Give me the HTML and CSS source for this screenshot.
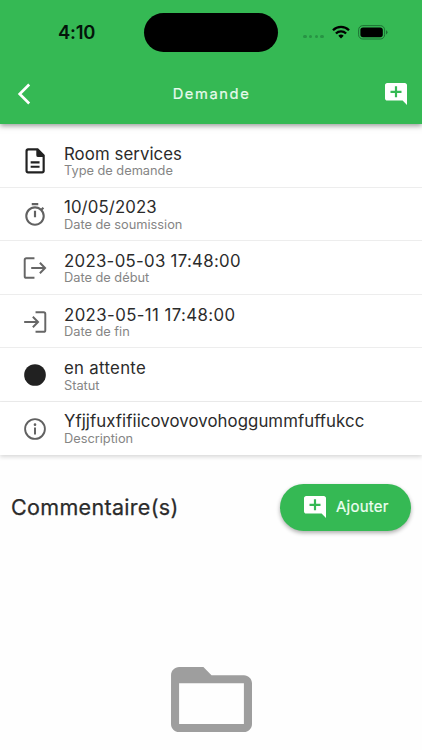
FILE: index.html
```html
<!DOCTYPE html>
<html lang="fr">
<head>
<meta charset="utf-8">
<title>Demande</title>
<link rel="stylesheet" href="styles.css">
</head>
<body>
<main class="screen">
  <header class="header">
    <div class="status">
      <span class="time">4:10</span>
      <span class="island"></span>
      <span class="signals">
        <span class="dots"><i></i><i></i><i></i><i></i></span>
        <svg class="wifi" viewBox="0 0 18 14"><g fill="none" stroke="#000" stroke-width="2.3"><path d="M1 5.2a11.3 11.3 0 0 1 16 0"/><path d="M3.9 8.5a7.2 7.2 0 0 1 10.2 0"/></g><path d="M9 13.4 6.3 10.8a3.8 3.8 0 0 1 5.4 0z"/></svg>
        <svg class="battery" viewBox="0 0 30 15"><rect x=".6" y=".6" width="26" height="13.4" rx="4.2" fill="none" stroke="#1d7134" stroke-width="1"/><rect x="2.4" y="2.4" width="22.4" height="9.8" rx="2.6"/><path d="M28 5.2v4.2q1.5-.6 1.5-2.1T28 5.2" fill="#1d7134"/></svg>
      </span>
    </div>
    <nav class="nav">
      <svg class="back" viewBox="0 0 14 24"><path d="M12.2 2.5 2.7 12l9.5 9.5" fill="none" stroke="#fff" stroke-width="2.7"/></svg>
      <h1 class="title">Demande</h1>
      <svg class="comment" viewBox="2 2 20 20"><path fill="#fff" d="M22 4c0-1.100-.9-2-2-2H4c-1.100 0-2 .9-2 2v12c0 1.100.9 2 2 2h14l4 4V4zm-5 7h-4v4h-2v-4H7V9h4V5h2v4h4z"/></svg>
    </nav>
  </header>
  <ul class="details">
    <li class="row">
      <svg class="icon dark" viewBox="0 0 24 24"><path fill-rule="evenodd" d="M5.500 .2h9.300L21 6.500v14.800c0 1.300-1 2.300-2.300 2.300H5.500c-1.300 0-2.300-1-2.300-2.300V2.500C3.200 1.200 4.200 .2 5.500 .2zm.6 2.100q-.9 0-.9.900v17.500q0 .8.900.8h12q.9 0 .9-.8V8.300h-4.100q-1.700 0-1.700-1.700V2.300z"/><path d="M8 12.300h8.200v1.900H8zm0 4.100h8.200v1.900H8z"/></svg>
      <div><div class="value tight">Room services</div><div class="label">Type de demande</div></div>
    </li>
    <li class="row">
      <svg class="icon" viewBox="0 0 24 24"><path d="M15 1H9v2h6V1zm-4 13h2V8h-2v6zm8.030-6.610 1.420-1.420c-.43-.51-.9-.99-1.410-1.410l-1.420 1.420C16.070 4.740 14.120 4 12 4c-4.970 0-9 4.030-9 9s4.020 9 9 9 9-4.030 9-9c0-2.120-.74-4.070-1.970-5.610zM12 20.100a7.100 7.100 0 1 1 0-14.200 7.100 7.100 0 0 1 0 14.200z"/></svg>
      <div><div class="value short-date">10/05/2023</div><div class="label">Date de soumission</div></div>
    </li>
    <li class="row">
      <svg class="icon line" viewBox="0 0 24 24"><path d="M11.500 3H4q-1.500 0-1.500 1.500v15Q2.500 21 4 21h7.500M8.500 12h12.800M16.500 7.200l4.800 4.800-4.800 4.800"/></svg>
      <div><div class="value">2023-05-03 17:48:00</div><div class="label">Date de début</div></div>
    </li>
    <li class="row">
      <svg class="icon line" viewBox="0 0 24 24"><path d="M12.500 3H20q1.500 0 1.500 1.500v15q0 1.500-1.500 1.500h-7.500M2 12h12.800M10 7.200l4.800 4.800-4.800 4.800"/></svg>
      <div><div class="value end-date">2023-05-11 17:48:00</div><div class="label">Date de fin</div></div>
    </li>
    <li class="row">
      <svg class="icon dark" viewBox="0 0 24 24"><circle cx="12" cy="12" r="10"/></svg>
      <div><div class="value">en attente</div><div class="label">Statut</div></div>
    </li>
    <li class="row">
      <svg class="icon" viewBox="0 0 24 24"><path fill-rule="evenodd" d="M12 2a10 10 0 1 0 0 20 10 10 0 0 0 0-20zm0 1.700a8.300 8.300 0 1 1 0 16.600 8.300 8.300 0 0 1 0-16.600z"/><path d="M11.100 10.500h1.800V17h-1.800z"/><circle cx="12" cy="8" r="1.200"/></svg>
      <div><div class="value tight">Yfjjfuxfifiicovovovohoggummfuffukcc</div><div class="label">Description</div></div>
    </li>
  </ul>
  <section class="comments">
    <h2 class="heading">Commentaire(s)</h2>
    <button class="add">
      <svg class="comment" viewBox="2 2 20 20"><path fill="#fff" d="M22 4c0-1.100-.9-2-2-2H4c-1.100 0-2 .9-2 2v12c0 1.100.9 2 2 2h14l4 4V4zm-5 7h-4v4h-2v-4H7V9h4V5h2v4h4z"/></svg>
      <span>Ajouter</span>
    </button>
  </section>
  <div class="empty">
    <svg class="folder" viewBox="2 4 20 16" preserveAspectRatio="none"><path d="M20 6h-8l-2-2H4c-1.100 0-1.990.9-1.990 2L2 18c0 1.100.9 2 2 2h16c1.100 0 2-.9 2-2V8c0-1.100-.9-2-2-2zm0 12H4V8h16v10z" fill="#9e9e9e"/></svg>
  </div>
</main>
</body>
</html>
```
FILE: styles.css
```css
* { box-sizing: border-box; }
html, body { height: 750px; overflow: hidden; }
body { margin: 0; background: #fefefe; font-family: Inter, "Liberation Sans", sans-serif; color: #2b2b2b; }
svg { display: block; flex: none; }
.screen { height: 750px; overflow: hidden; display: flex; flex-direction: column; }
.header { height: 124px; flex: none; background: #35b954; box-shadow: 0 2px 5px rgba(0,0,0,.38); position: relative; z-index: 1; }
.status { height: 64px; display: grid; grid-template-columns: 144px 134px 144px; align-items: center; }
.time { padding-left: 58px; font-size: 18.4px; line-height: 22px; font-weight: 600; color: #03150a; letter-spacing: -.2px; }
.island { height: 39px; border-radius: 20px; background: #000; }
.signals { display: flex; align-items: center; padding-left: 25px; }
.dots { display: flex; gap: 2.200px; width: 29px; margin-top: 9px; }
.dots i { width: 3.600px; height: 3.600px; border-radius: 50%; background: #279444; }
.wifi { width: 18px; height: 14px; }
.battery { width: 30px; height: 15px; margin-left: 8px; }
.nav { height: 60px; padding: 0 15px 0 17px; display: grid; grid-template-columns: 80px 1fr 80px; align-items: center; }
.back { width: 14px; height: 24px; }
.title { margin: 0; font-size: 14.700px; line-height: 20px; font-weight: 400; -webkit-text-stroke: .2px; letter-spacing: 1.600px; text-align: center; color: #e9fbed; padding-right: 1px; }
.comment { width: 22px; height: 22px; }
.nav .comment { justify-self: end; }
.details { flex: none; list-style: none; margin: 0; padding: 10px 0 0; }
.row { height: 53.600px; padding: 1.500px 0 0 21.500px; display: flex; align-items: center; gap: 16.500px; background: #fff; border-bottom: 1px solid #ededed; box-shadow: 0 1px 2px rgba(0,0,0,.03); }
.row:last-child { height: 53px; border-bottom: 0; box-shadow: 0 2px 4px rgba(0,0,0,.15); padding-top: .500px; }
.icon { width: 26px; height: 26px; fill: #616161; }
.icon.dark { fill: #212121; }
.icon.line { fill: none; stroke: #666; stroke-width: 1.800; }
.value { font-size: 16.800px; line-height: 20px; letter-spacing: .3px; white-space: nowrap; height: 19.500px; }
.value.tight { letter-spacing: .070px; }
.value.short-date { letter-spacing: .100px; }
.value.end-date { letter-spacing: .400px; }
.label { font-size: 12.800px; line-height: 15px; letter-spacing: -.010px; color: #858585; }
.comments { flex: none; height: 105px; padding: 0 11px; display: flex; align-items: center; justify-content: space-between; }
.heading { margin: 0; font-size: 21.500px; line-height: 28px; font-weight: 400; -webkit-text-stroke: .25px; letter-spacing: .320px; padding-bottom: 1px; }
.add { width: 131px; height: 47px; padding: 0 0 0 24px; border: 0; border-radius: 24px; background: #35b954; box-shadow: 0 2px 4px rgba(0,0,0,.32); display: flex; align-items: center; gap: 10px; color: #effff2; font: 400 15px/20px Inter, sans-serif; -webkit-text-stroke: .2px; letter-spacing: .250px; }
.empty { flex: 1; display: flex; justify-content: center; padding-top: 107px; }
.folder { width: 81px; height: 65px; }
```
